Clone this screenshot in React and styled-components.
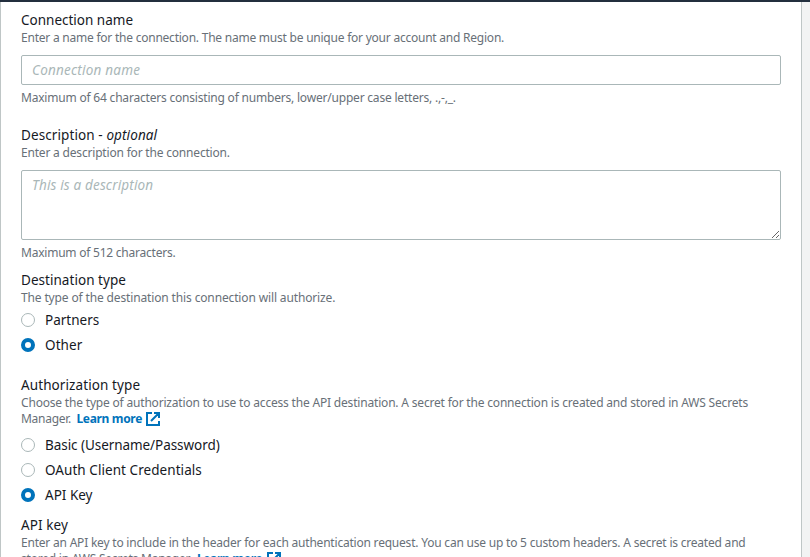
import React from "react";
import styled, { createGlobalStyle } from "styled-components";

const GlobalStyle = createGlobalStyle`
  * { box-sizing: border-box; }
  html, body { margin: 0; height: 100%; overflow: hidden; background: #f2f3f3; }
  body { font-family: "Noto Sans", "Open Sans", sans-serif; color: #16191f; }
`;

const Page = styled.div`
  height: 557px;
  overflow: hidden;
  border-top: 2px solid #232f3e;
`;

const Panel = styled.main`
  width: 802px;
  min-height: 600px;
  padding: 8px 20px 0;
  background: #fff;
  border: solid #bfc6c6;
  border-width: 0 1px;
`;

const Field = styled.section`
  margin-bottom: ${(p) => p.$gap}px;
`;

const Label = styled.div`
  font-size: 13.5px;
  line-height: 20px;
  white-space: nowrap;
  letter-spacing: ${(p) => p.$track || 0}px;
`;

const Hint = styled.div`
  font-size: 12px;
  line-height: 16px;
  color: #687078;
  white-space: nowrap;
`;

const Line = styled.div`
  display: flex;
  height: 16px;
  letter-spacing: ${(p) => p.$track || 0}px;
`;

const TextInput = styled.input`
  display: block;
  width: 760px;
  height: 30px;
  margin: 9px 0 5px;
  padding: 0 10px;
  border: 1px solid #aab7b8;
  border-radius: 2px;
  background: #fff;
  font: 13.5px "Noto Sans", sans-serif;
  letter-spacing: ${(p) => p.$track || 0}px;
  outline: none;
  &::placeholder { color: #aab7b8; font-style: italic; }
`;

const TextArea = styled(TextInput).attrs({ as: "textarea" })`
  height: 70px;
  padding: 4px 10px;
  line-height: 20px;
  resize: both;
`;

const Options = styled.div`
  display: flex;
  flex-direction: column;
  gap: 5px;
  margin-top: ${(p) => p.$top}px;
`;

const Option = styled.label`
  display: flex;
  align-items: center;
  gap: 10px;
  height: 20px;
`;

const Radio = styled.input.attrs({ type: "radio" })`
  appearance: none;
  width: 14px;
  height: 14px;
  margin: 0;
  border-radius: 50%;
  border: 1px solid #aab7b8;
  background: #fff;
  &:checked { border: 4px solid #0073bb; }
`;

const Link = styled.a`
  display: flex;
  margin-left: 5.5px;
  color: #0073bb;
  font-weight: 700;
  letter-spacing: -0.33px;
`;

const LinkIcon = styled.svg`
  flex: none;
  width: 14px;
  height: 14px;
  margin: 1px 0 0 4.5px;
`;

function LearnMore() {
  return (
    <Link>
      Learn more
      <LinkIcon viewBox="0 0 14 14" fill="none" stroke="#0073bb" strokeWidth="2">
        <path d="M6 1H1v12h12V9M8 1h5v5M13 1L5 9" />
      </LinkIcon>
    </Link>
  );
}

function RadioOption({ name, label, track, checked }) {
  return (
    <Option>
      <Radio name={name} defaultChecked={checked} />
      <Label as="span" $track={track}>{label}</Label>
    </Option>
  );
}

export default function App() {
  return (
    <>
      <GlobalStyle />
      <Page>
        <Panel>
          <Field $gap={19}>
            <Label>Connection name</Label>
            <Hint><Line $track={-0.23}>Enter a name for the connection. The name must be unique for your account and Region.</Line></Hint>
            <TextInput $track={0.22} placeholder="Connection name" />
            <Hint><Line $track={-0.2}>Maximum of 64 characters consisting of numbers, lower/upper case letters, .,-,_.</Line></Hint>
          </Field>
          <Field $gap={9}>
            <Label $track={0.1}>Description - <i>optional</i></Label>
            <Hint><Line $track={-0.19}>Enter a description for the connection.</Line></Hint>
            <TextArea $track={0.16} placeholder="This is a description" />
            <Hint><Line $track={-0.23}>Maximum of 512 characters.</Line></Hint>
          </Field>
          <Field $gap={20}>
            <Label $track={0.04}>Destination type</Label>
            <Hint><Line $track={-0.14}>The type of the destination this connection will authorize.</Line></Hint>
            <Options $top={4}>
              <RadioOption name="destination" label="Partners" />
              <RadioOption name="destination" label="Other" track={0.1} checked />
            </Options>
          </Field>
          <Field $gap={10}>
            <Label $track={0.1}>Authorization type</Label>
            <Hint>
              <Line $track={-0.187}>Choose the type of authorization to use to access the API destination. A secret for the connection is created and stored in AWS Secrets</Line>
              <Line $track={-0.28}>Manager.<LearnMore /></Line>
            </Hint>
            <Options $top={8}>
              <RadioOption name="authorization" label="Basic (Username/Password)" track={-0.06} />
              <RadioOption name="authorization" label="OAuth Client Credentials" track={0.06} />
              <RadioOption name="authorization" label="API Key" checked />
            </Options>
          </Field>
          <Field $gap={0}>
            <Label $track={0.1}>API key</Label>
            <Hint>
              <Line $track={-0.21}>Enter an API key to include in the header for each authentication request. You can use up to 5 custom headers. A secret is created and</Line>
              <Line $track={-0.22}>stored in AWS Secrets Manager.<LearnMore /></Line>
            </Hint>
          </Field>
        </Panel>
      </Page>
    </>
  );
}
